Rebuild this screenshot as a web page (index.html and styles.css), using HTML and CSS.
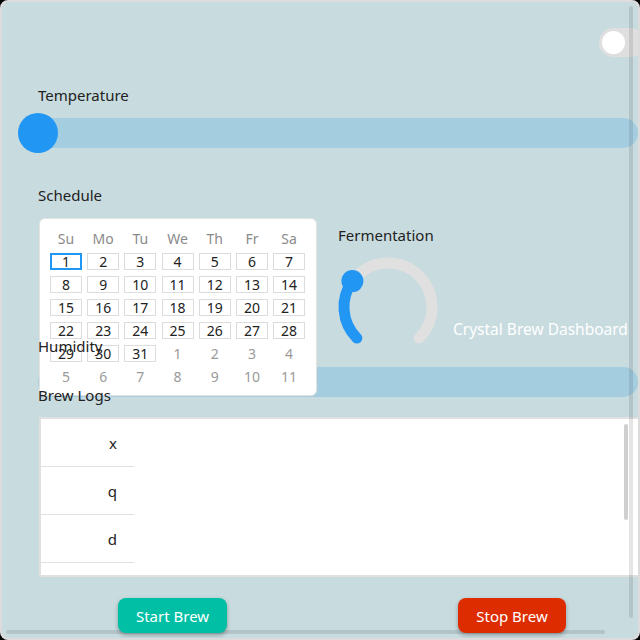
FILE: index.html
```html
<!DOCTYPE html>
<html>
<head>
<meta charset="utf-8">
<link rel="stylesheet" href="styles.css">
</head>
<body>
<div class="app">
  <div class="toggle-row">
    <div class="toggle"><span class="toggle-thumb"></span></div>
  </div>

  <div class="label">Temperature</div>
  <div class="slider slider-temp"><span class="slider-thumb"></span></div>

  <div class="label label-schedule">Schedule</div>

  <div class="mid">
    <div class="cal-anchor">
      <div class="calendar">
        <div class="cal-grid">
          <span class="wd">Su</span><span class="wd">Mo</span><span class="wd">Tu</span><span class="wd">We</span><span class="wd">Th</span><span class="wd">Fr</span><span class="wd">Sa</span>
          <span class="day sel">1</span><span class="day">2</span><span class="day">3</span><span class="day">4</span><span class="day">5</span><span class="day">6</span><span class="day">7</span>
          <span class="day">8</span><span class="day">9</span><span class="day">10</span><span class="day">11</span><span class="day">12</span><span class="day">13</span><span class="day">14</span>
          <span class="day">15</span><span class="day">16</span><span class="day">17</span><span class="day">18</span><span class="day">19</span><span class="day">20</span><span class="day">21</span>
          <span class="day">22</span><span class="day">23</span><span class="day">24</span><span class="day">25</span><span class="day">26</span><span class="day">27</span><span class="day">28</span>
          <span class="day">29</span><span class="day">30</span><span class="day">31</span><span class="out">1</span><span class="out">2</span><span class="out">3</span><span class="out">4</span>
          <span class="out">5</span><span class="out">6</span><span class="out">7</span><span class="out">8</span><span class="out">9</span><span class="out">10</span><span class="out">11</span>
        </div>
      </div>
    </div>
    <div class="ferm">
      <div class="label">Fermentation</div>
      <svg class="gauge" width="104" height="82" viewBox="0 0 104 82">
        <path d="M20.89 83.11 A44 44 0 1 1 83.11 83.11" fill="none" stroke="#e0e0e0" stroke-width="11" stroke-linecap="round"/>
        <path d="M20.89 83.11 A44 44 0 0 1 16.4 26.1" fill="none" stroke="#2196f3" stroke-width="11" stroke-linecap="round"/>
        <circle cx="16.4" cy="26.1" r="11" fill="#2196f3"/>
      </svg>
    </div>
    <div class="title">Crystal Brew Dashboard</div>
  </div>

  <div class="label label-hum">Humidity</div>
  <div class="slider slider-hum"></div>

  <div class="label label-logs">Brew Logs</div>

  <div class="logs">
    <div class="log-row">x</div>
    <div class="log-row">q</div>
    <div class="log-row">d</div>
    <div class="log-row"></div>
    <span class="logs-scroll"></span>
  </div>

  <div class="buttons">
    <button class="btn btn-start">Start Brew</button>
    <button class="btn btn-stop">Stop Brew</button>
  </div>

  <span class="vscroll"></span>
  <span class="hscroll"></span>
</div>
</body>
</html>
```

FILE: styles.css
```css
html, body {
  margin: 0;
  padding: 0;
  background: #000;
}

.app {
  position: relative;
  width: 640px;
  height: 640px;
  box-sizing: border-box;
  border: 2px solid #dcdcdc;
  border-radius: 8px;
  background: #c8dbdf;
  overflow: hidden;
  padding-left: 36px;
  font-family: "Noto Sans", "Open Sans", sans-serif;
  color: #222;
}

.toggle-row {
  display: flex;
  justify-content: flex-end;
  padding-top: 26px;
  margin-right: -7px;
}

.toggle {
  width: 46px;
  height: 29px;
  border-radius: 15px;
  background: #dfdfdf;
  display: flex;
  align-items: center;
  padding-left: 3px;
  box-sizing: border-box;
}

.toggle-thumb {
  width: 23px;
  height: 23px;
  border-radius: 50%;
  background: #fff;
}

.label {
  position: relative;
  z-index: 2;
  font-size: 15px;
  line-height: 18px;
  height: 18px;
  color: #222;
  margin-top: 29px;
  white-space: nowrap;
}

.label-schedule {
  margin-top: 38px;
}

.label-hum {
  margin-top: 0;
}

.slider {
  position: relative;
  width: 600px;
  height: 30px;
  margin-top: 13px;
  border-radius: 15px;
  background: #a4cde0;
}

.slider-temp {
  margin-top: 14px;
}

.slider-thumb {
  position: absolute;
  left: -20px;
  top: -5px;
  width: 40px;
  height: 40px;
  border-radius: 50%;
  background: #2196f3;
}

.mid {
  display: flex;
  height: 119px;
  margin-top: 14px;
}

.mid .label {
  margin-top: 8px;
}

.cal-anchor {
  position: relative;
  width: 300px;
  flex: none;
}

.calendar {
  position: absolute;
  z-index: 1;
  left: 1px;
  top: 0;
  width: 278px;
  height: 178px;
  box-sizing: border-box;
  background: #fff;
  border: 1px solid #e2e2e2;
  border-radius: 6px;
  padding: 11px 0 0 10px;
}

.cal-grid {
  display: grid;
  grid-template-columns: repeat(7, 32px);
  grid-auto-rows: 17px;
  column-gap: 5.2px;
  row-gap: 6px;
  font-size: 14px;
}

.cal-grid span {
  display: flex;
  align-items: center;
  justify-content: center;
  box-sizing: border-box;
  line-height: 1;
}

.wd {
  color: #8a8a8a;
}

.day {
  border: 1px solid #dcdcdc;
  color: #222;
}

.day.sel {
  border: 2px solid #2196f3;
}

.out {
  color: #9a9a9a;
}

.ferm {
  display: flex;
  flex-direction: column;
  width: 102px;
  flex: none;
}

.gauge {
  display: block;
  margin-top: 11px;
  margin-left: -2px;
  overflow: visible;
}

.title {
  margin-left: 13px;
  margin-top: 102px;
  font-size: 15.5px;
  line-height: 18px;
  height: 18px;
  color: #fff;
  white-space: nowrap;
}

.slider-hum {
  margin-top: 12px;
}

.label-logs {
  margin-top: -11px;
}

.logs {
  position: relative;
  margin-top: 13px;
  margin-left: 1px;
  width: 602px;
  height: 160px;
  box-sizing: border-box;
  border: 2px solid #e0e0e0;
  background: #fff;
  overflow: hidden;
}

.log-row {
  width: 93px;
  height: 48px;
  box-sizing: border-box;
  border-bottom: 1px solid #e0e0e0;
  display: flex;
  align-items: center;
  justify-content: flex-end;
  padding-right: 17px;
  font-size: 15px;
  color: #222;
}

.logs-scroll {
  position: absolute;
  right: 11px;
  top: 5px;
  width: 4px;
  height: 96px;
  border-radius: 2px;
  background: #cfcfcf;
}

.buttons {
  display: flex;
  gap: 231px;
  padding-left: 80px;
  margin-top: 21px;
}

.btn {
  position: relative;
  z-index: 3;
  height: 35px;
  border: none;
  border-radius: 8px;
  color: #fff;
  font-family: "Noto Sans", "Open Sans", sans-serif;
  font-size: 15px;
  padding: 0;
  box-shadow: 0 2px 4px rgba(0, 0, 0, 0.3);
}

.btn-start {
  width: 109px;
  background: #00bfa5;
}

.btn-stop {
  width: 108px;
  background: #dd2c00;
}

.vscroll {
  position: absolute;
  left: 627px;
  top: 4px;
  width: 4px;
  height: 612px;
  border-radius: 2px;
  background: rgba(0, 0, 0, 0.1);
  z-index: 4;
}

.hscroll {
  position: absolute;
  left: 4px;
  top: 628px;
  width: 599px;
  height: 4px;
  border-radius: 2px;
  background: rgba(0, 0, 0, 0.1);
  z-index: 2;
}
```
